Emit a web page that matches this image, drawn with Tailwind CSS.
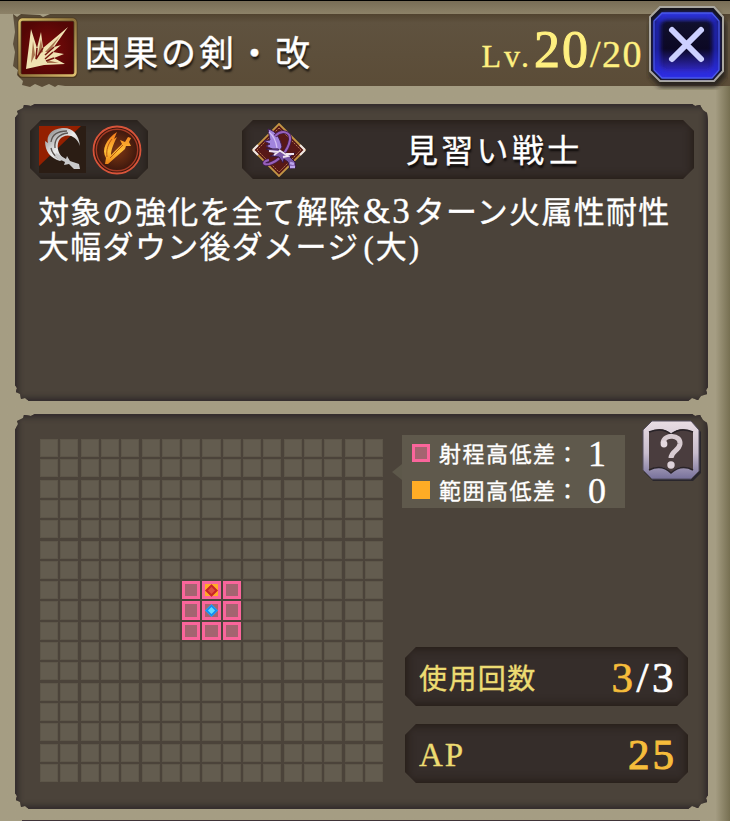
<!DOCTYPE html>
<html lang="ja">
<head>
    <meta charset="UTF-8">
    <meta name="viewport" content="width=device-width, initial-scale=1.0">
    <title>因果の剣・改</title>
    <script src="https://cdn.jsdelivr.net/npm/@tailwindcss/browser@4"></script>
</head>
<body class="w-[730px] h-[821px] overflow-hidden bg-[#a59d83] text-white font-['Liberation_Serif','Noto_Sans_CJK_JP',serif] [-webkit-text-stroke:0.35px_currentColor]">
    <div class="relative w-[730px] h-[821px] overflow-hidden flex flex-col bg-linear-to-r from-[#a59d83] from-98% to-[#777052]">

        <!-- Header -->
        <div class="h-[14px] shrink-0 border-t border-black bg-linear-to-b from-[#786d56] to-[#8d8268]"></div>
        <header class="relative h-[73px] shrink-0 ml-[13px] flex items-center bg-linear-to-b from-[#51432f] via-[#5f523f] via-12% to-[#5b4c37] [clip-path:polygon(0_0,4px_3px,8px_0,27px_1px,30px_3px,37px_0,100%_0,100%_72px,52px_72px,45px_71px,42px_73px,36px_70px,29px_73px,22px_70px,17px_73px,9px_71px,10px_67px,4px_61px,5px_56px,0_52px,2px_38px,0_30px,2px_18px)]">
            <svg class="ml-[4px] mt-[-6px] size-[61px] shrink-0" viewBox="0 0 61 61">
                <defs>
                    <linearGradient id="gold" x1="0" y1="0" x2="1" y2="1">
                        <stop offset="0" stop-color="#d8bd68"/><stop offset=".5" stop-color="#8c7039"/><stop offset="1" stop-color="#e0c070"/>
                    </linearGradient>
                    <radialGradient id="red"><stop offset="0" stop-color="#7e0b0a"/><stop offset="1" stop-color="#540605"/></radialGradient>
                </defs>
                <rect x="2.5" y="2.5" width="56" height="57" rx="3" fill="url(#red)" stroke="#4b3921" stroke-width="4"/>
                <rect x="2.5" y="2.5" width="56" height="56" rx="3" fill="none" stroke="url(#gold)" stroke-width="2.4"/>
                <path d="M9 52 14 12 20 31 24 15 26 31 51 10 37 30 44 28 36 35 47 37 37 41 48 47 27 48Z" fill="#f0e2b2"/>
                <path d="M14 46 16 24 18 38ZM21 37 24 22 26 35ZM28 35 43 19 32 35ZM30 46 42 46 30 43Z" fill="#a8744e"/>
                <path d="M20 31 19 42 26 31M28 38 37 30M28 42 36 35M29 44 37 41" fill="none" stroke="#761610" stroke-width="1.5"/>
            </svg>
            <h1 class="ml-[7px] mt-[8px] text-[35px] leading-[50px] tracking-[3px] whitespace-nowrap [text-shadow:1px_3px_2px_#211b14]">因果の剣・改</h1>
            <div class="ml-auto mr-[87px] mt-[4px] flex items-baseline text-[#fff080]">
                <span class="text-[32px] tracking-[3px]">Lv.</span>
                <span class="ml-[2px] text-[52px] leading-[56px] tracking-[2px] [-webkit-text-stroke:1px_currentColor]">20</span>
                <span class="text-[38px] tracking-[1.5px]">/20</span>
            </div>
        </header>

        <!-- Description panel -->
        <section class="mt-[17px] ml-[15px] w-[693px] h-[297px] shrink-0 bg-[#4b433a] px-[15px] pt-[16px] shadow-[inset_0_0_5px_4px_#352f2d,inset_0_0_0_2px_#403438] [clip-path:polygon(0_14px,3px_10px,2px_7px,8px_4px,9px_1px,16px_2px,20px_0,677px_0,680px_2px,685px_1px,688px_6px,692px_9px,100%_18px,100%_283px,691px_286px,692px_290px,686px_292px,683px_296px,677px_294px,673px_100%,14px_100%,10px_294px,6px_295px,5px_290px,1px_288px,2px_284px,0_281px)]">
            <div class="flex justify-between">
                <div class="w-[118px] h-[59px] flex items-center pl-[9px] gap-[6px] bg-[#342d29] shadow-[inset_0_0_9px_2px_#261f19] [clip-path:polygon(11px_0,107px_0,100%_11px,100%_48px,107px_100%,11px_100%,0_48px,0_11px)]">
                    <svg class="w-[47px] h-[47px]" viewBox="0 0 47 47">
                        <defs><linearGradient id="silver" x1="0" y1="0" x2="1" y2="1"><stop offset="0" stop-color="#777"/><stop offset=".5" stop-color="#eee"/><stop offset="1" stop-color="#999"/></linearGradient></defs>
                        <path d="M0 0H47V47H0Z" fill="#2b1d14"/>
                        <path d="M0 0H42L0 40Z" fill="#942000"/>
                        <!-- crescent slash -->
                        <path d="M41 20C40 8 33 1 23 2 12 3 7 10 9 17L6 15C6 25 11 32 21 35L25 33C18 27 17 18 21 13 26 7 37 8 41 20Z" fill="url(#silver)"/>
                        <path d="M12 16C13 9 19 5 28 5M16 22C15 13 20 8 29 7M12 22C13 27 16 30 19 32" fill="none" stroke="#5c5652" stroke-width="1.3"/>
                        <!-- sword hilt -->
                        <path d="M17 27 27 33 28 30 31 35 40 38 41 43 35 43 30 38 25 39 26 36 16 31Z" fill="#c9c9ca"/>
                    </svg>
                    <svg class="w-[50px] h-[50px]" viewBox="0 0 50 50">
                        <defs>
                            <radialGradient id="ember"><stop offset="0" stop-color="#803713"/><stop offset="1" stop-color="#35140d"/></radialGradient>
                            <linearGradient id="flame" x1="0" y1="0" x2="0" y2="1"><stop offset="0" stop-color="#f47818"/><stop offset=".6" stop-color="#ffc038"/><stop offset="1" stop-color="#e98215"/></linearGradient>
                        </defs>
                        <circle cx="25" cy="25" r="23.5" fill="url(#ember)" stroke="#d8543a" stroke-width="1.8"/>
                        <circle cx="25" cy="25" r="20.7" fill="none" stroke="#a53b25" stroke-width="1.4"/>
                        <path d="M13 39 14 33C9 25 14 14 25 7L22 14 25 12C21 20 19 25 19 30L30 19 28 15 33 17 36 12 39 13 37 17 39 21 34 21 33 24 16 39Z" fill="url(#flame)"/>
                        <path d="M15 32C14 25 16 19 20 14M18 33 31 20" fill="none" stroke="#b65612" stroke-width="1"/>
                    </svg>
                </div>
                <div class="w-[452px] h-[59px] mr-[-1px] flex items-center bg-[#352d2a] shadow-[inset_0_0_9px_2px_#261d16] [clip-path:polygon(11px_0,441px_0,100%_11px,100%_48px,441px_100%,11px_100%,0_48px,0_11px)]">
                    <svg class="ml-[10px] w-[54px] h-[54px] shrink-0" viewBox="0 0 54 54">
                        <path d="M27 1 53 27 27 53 1 27Z" fill="#571817" stroke="#c39545" stroke-width="1.8"/>
                        <path d="M27 5 49 27 27 49 5 27Z" fill="none" stroke="#c98a58" stroke-width=".8" stroke-dasharray="2 1"/>
                        <path d="M1 27 6 22M1 27 6 32M53 27 48 22M53 27 48 32" stroke="#eee6e4" stroke-width="2"/>
                        <!-- wing -->
                        <path d="M16 6C24 8 28 15 30 24L26 30 20 26 14 23 18 21 12 18 18 17Z" fill="#a184dd" stroke="#432052"/>
                        <path d="M17 9C22 13 24 18 25 25" fill="none" stroke="#d2bdf3" stroke-width="1.3"/>
                        <!-- ring -->
                        <path d="M23 13C30 6 39 9 38 17 36 28 27 38 17 41 9 42 12 38 17 37" fill="none" stroke="#432052" stroke-width="3.6"/>
                        <path d="M23 13C30 6 39 9 38 17 36 28 27 38 17 41 9 42 12 38 17 37" fill="none" stroke="#9860bb" stroke-width="2"/>
                        <!-- blade and hilt -->
                        <path d="M14 26 26 26 35 31 43 30 38 34 43 39 44 44 38 46 36 39 32 36 31 40 27 34 18 33 23 31Z" fill="#7857a5" stroke="#35183e"/>
                        <path d="M17 28 26 29 22 32M27 27 36 33 31 34M34 31 42 31" fill="none" stroke="#f0e6f0" stroke-width="1.8"/>
                        <path d="M38 40 42 41M38 44 43 44" stroke="#bca5ed" stroke-width="2.5"/>
                    </svg>
                    <h2 class="ml-[100px] mt-[2px] text-[32px] leading-[48px] tracking-[3.3px] whitespace-nowrap [text-shadow:1px_3px_2px_#0e0b0a]">見習い戦士</h2>
                </div>
            </div>
            <p class="mt-[16px] ml-[8px] text-[31px] leading-[35px] tracking-[1.3px] whitespace-nowrap">対象の強化を全て解除<span class="ml-[2px] mr-[2px] text-[35px] leading-[30px] tracking-[2px]">&amp;3</span>ターン火属性耐性<br>大幅ダウン後ダメージ<span class="ml-[4px] tracking-[2px]">(大)</span></p>
        </section>

        <!-- Range panel -->
        <section class="relative mt-[13px] ml-[15px] w-[693px] h-[395px] shrink-0 flex bg-[#4b433a] pl-[25px] pt-[25px] shadow-[inset_0_0_5px_4px_#352f2d,inset_0_0_0_2px_#403438] [clip-path:polygon(0_16px,3px_10px,2px_7px,8px_4px,9px_1px,16px_2px,20px_0,677px_0,680px_2px,685px_1px,688px_6px,692px_9px,100%_18px,100%_381px,691px_384px,692px_388px,686px_390px,683px_394px,677px_392px,673px_100%,14px_100%,10px_392px,6px_393px,5px_388px,1px_386px,2px_382px,0_379px)]">
            <div id="grid" class="w-[343px] h-[343px] shrink-0 grid grid-cols-17 grid-rows-17 gap-[2.3px]"></div>

            <div class="flex flex-col ml-[9px]">
                <div class="flex items-center mt-[-4px]">
                    <div class="border-y-[8px] border-y-transparent border-r-[10px] border-r-[#5d584a]"></div>
                    <div class="w-[223px] h-[73px] bg-[#5f594c] pl-[10px] flex flex-col justify-center text-[22px]">
                        <div class="h-[37px] flex items-center">
                            <i class="size-[18px] border-[3px] border-[#fa659b] bg-[#a46470] mr-[9px]"></i>
                            <span class="w-[148px] mt-[2px] tracking-[1.5px] whitespace-nowrap">射程高低差：</span>
                            <span class="w-[20px] mt-[3px] text-center text-[36px] leading-[37px]">1</span>
                        </div>
                        <div class="h-[37px] flex items-center">
                            <i class="size-[18px] bg-[#ffac25] mr-[9px]"></i>
                            <span class="w-[148px] mt-[2px] tracking-[1.5px] whitespace-nowrap">範囲高低差：</span>
                            <span class="w-[20px] mt-[3px] text-center text-[36px] leading-[37px]">0</span>
                        </div>
                    </div>
                </div>
                <div class="mt-[139px] ml-[13px] w-[283px] flex flex-col gap-[18px]">
                    <div class="h-[59px] flex items-center justify-between pl-[14px] pr-[11px] bg-[#352d2a] shadow-[inset_0_0_9px_2px_#261d16] [clip-path:polygon(11px_0,272px_0,100%_11px,100%_48px,272px_100%,11px_100%,0_48px,0_11px)]">
                        <span class="mt-[7px] text-[28px] tracking-[1.4px] text-[#eddc72]">使用回数</span>
                        <span class="mt-[4px] text-[43px] tracking-[3.5px] [-webkit-text-stroke:0.7px_currentColor]"><span class="text-[#f6bd3b]">3</span>/3</span>
                    </div>
                    <div class="h-[59px] flex items-center justify-between pl-[14px] pr-[11px] bg-[#352d2a] shadow-[inset_0_0_9px_2px_#261d16] [clip-path:polygon(11px_0,272px_0,100%_11px,100%_48px,272px_100%,11px_100%,0_48px,0_11px)]">
                        <span class="mt-[5px] text-[33px] tracking-[2px] text-[#eddc72]">AP</span>
                        <span class="mt-[3px] text-[43px] tracking-[3px] text-[#f6bd3b] [-webkit-text-stroke:1px_currentColor]">25</span>
                    </div>
                </div>
            </div>

            <!-- Help button -->
            <button class="absolute left-[626px] top-[6px] size-[62px]">
                <svg class="size-[62px]" viewBox="0 0 62 62">
                    <defs><linearGradient id="plate" x1="0" y1="0" x2="0" y2="1"><stop offset="0" stop-color="#e9dde3"/><stop offset=".55" stop-color="#c8bdcd"/><stop offset="1" stop-color="#77719b"/></linearGradient></defs>
                    <path d="M11 3H52L60 12V53L52 61H12L3 52V12Z" fill="#29262c"/>
                    <path d="M11 1H50L58 10V51L50 59H11L2 50V10Z" fill="url(#plate)" stroke="#554f5e"/>
                    <path d="M8 12Q21 5 30 14Q40 5 52 12V50Q40 43 30 53Q21 43 8 50Z" fill="#4a3d3e"/>
                    <path d="M8 50Q21 44 30 53Q40 44 52 50M8 12Q21 7 30 14Q40 7 52 12" fill="none" stroke="#292328" stroke-width="1.5"/>
                    <path d="M22 23C23 14 40 14 39 24C38 31 30 31 30 38" fill="none" stroke="#d8cbd1" stroke-width="5"/>
                    <circle cx="23" cy="24" r="3.4" fill="#e4d8de"/>
                    <circle cx="30" cy="45" r="3.7" fill="#ded2da"/>
                </svg>
            </button>
        </section>

        <!-- Top edge of the next panel -->
        <div class="mt-[11px] ml-[22px] w-[678px] h-px shrink-0 bg-[#403438]"></div>

        <!-- Close button -->
        <button class="absolute left-[646px] top-[4px] w-[82px] h-[86px]">
            <svg class="w-[82px] h-[86px]" viewBox="0 0 82 86">
                <defs>
                    <linearGradient id="blue" x1="0" y1="0" x2="0" y2="1"><stop offset="0" stop-color="#3c45e8"/><stop offset=".15" stop-color="#10102c"/><stop offset=".55" stop-color="#0c0824"/><stop offset="1" stop-color="#3b32f4"/></linearGradient>
                    <filter id="soft"><feGaussianBlur stdDeviation="2.5"/></filter>
                </defs>
                <path d="M14 7H70L80 19V72L70 83H14L4 72V19Z" fill="#28221b" filter="url(#soft)"/>
                <path d="M14 3H68L77 13V67L68 77H14L4 67V13Z" fill="#14131c" stroke="#aaa8a1" stroke-width="2"/>
                <path d="M16 9H66L73 17V66L66 74H16L8 66V17Z" fill="url(#blue)"/>
                <path d="M18 12H64L70 19V64L64 71H18L11 64V19Z" fill="none" stroke="#2829df" stroke-width="5" filter="url(#soft)"/>
                <path d="M16 9H66L73 17V66L66 74H16L8 66V17Z" fill="none" stroke="#4858e8" stroke-width="1.3"/>
                <path d="M26 26 55 55M55 26 26 55" stroke="#ccd0ff" stroke-width="6" stroke-linecap="round"/>
            </svg>
        </button>
    </div>

    <script>
        const grid = document.getElementById("grid");

        for (let row = 0; row < 17; row++) {
            for (let col = 0; col < 17; col++) {
                const cell = document.createElement("div");
                const inRange = row >= 7 && row <= 9 && col >= 7 && col <= 9;
                cell.className = inRange
                    ? "flex items-center justify-center border-[3px] border-[#fa659b] bg-[#a46470]"
                    : "border border-[#5d5649] bg-[#635c4f]";
                // Target cell
                if (row === 7 && col === 8) {
                    cell.className = "flex items-center justify-center border-[3px] border-[#fa659b] bg-[#ffac25]";
                    cell.innerHTML = '<div class="size-[9px] shrink-0 rotate-45 bg-[#e05040] border-2 border-[#c82528]"></div>';
                }
                // Own position
                if (row === 8 && col === 8) {
                    cell.innerHTML = '<div class="size-[9px] shrink-0 rotate-45 bg-[#65dcff] border-2 border-[#158df0]"></div>';
                }
                grid.appendChild(cell);
            }
        }
    </script>
</body>
</html>
